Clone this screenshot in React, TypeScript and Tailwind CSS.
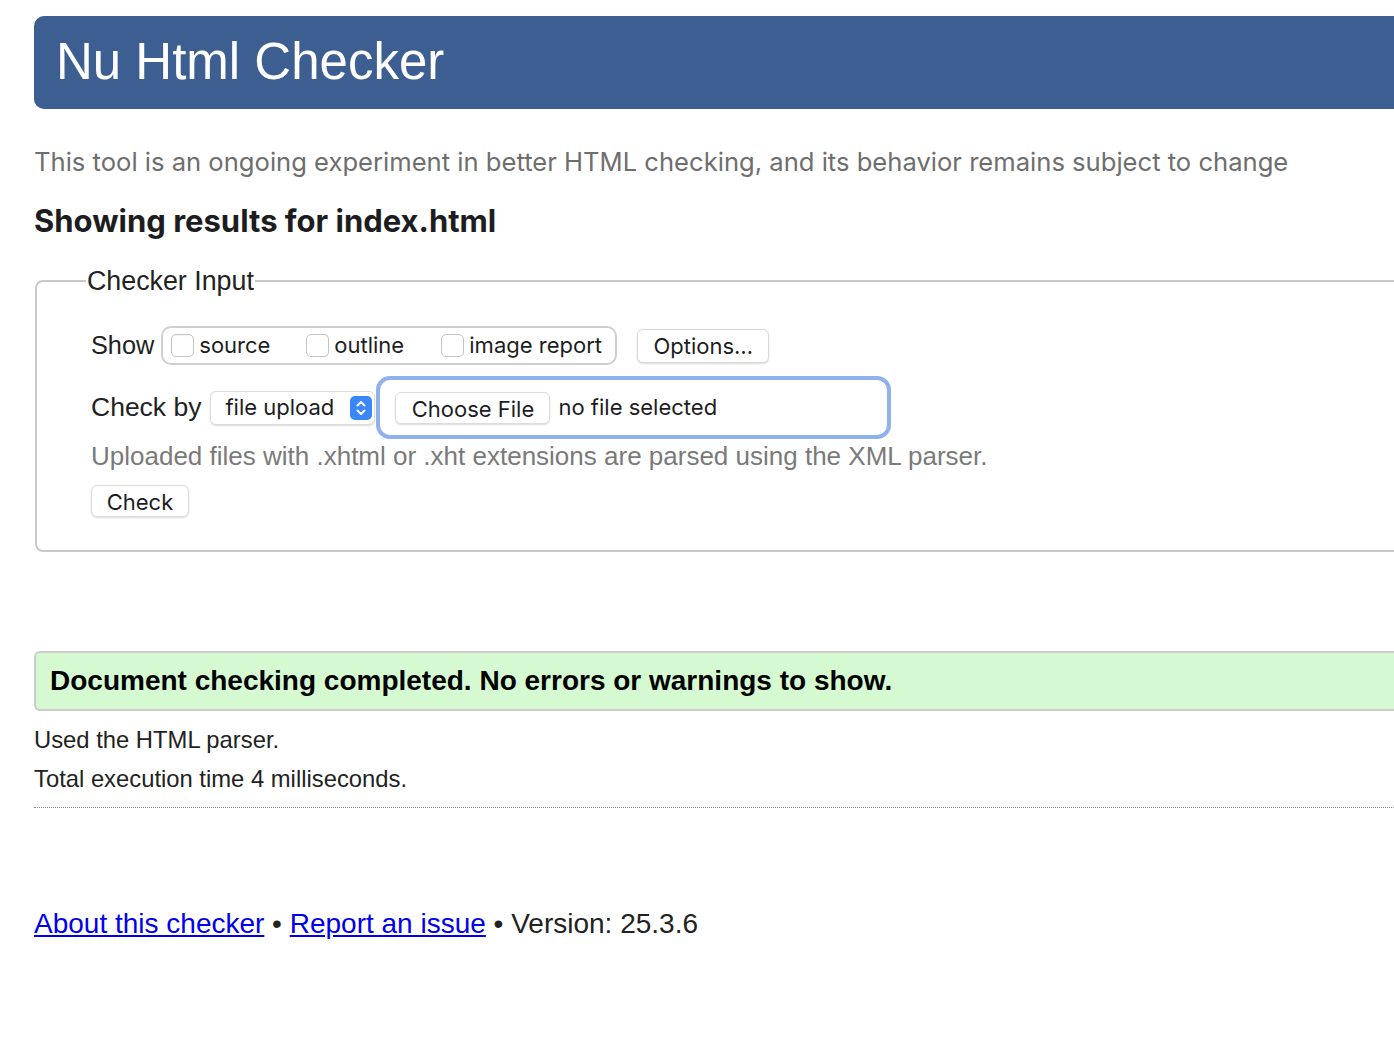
export default function App() {
  const helv = "font-['Liberation_Sans',Arial,sans-serif]"
  const sys = "font-['Inter','Noto_Sans',sans-serif]"

  return (
    <main className={`min-h-screen w-full overflow-hidden bg-white ${helv} text-[#222]`}>
      <div className="w-[1420px] pl-[34px] pt-[16px]">
        <header className="h-[93px] rounded-l-[10px] bg-[#3d5e91] pl-[22px] flex items-center">
          <h1 className="text-[51px] leading-none text-white -mt-[2px]">Nu Html Checker</h1>
        </header>

        <p className={`${sys} mt-[38px] text-[25.6px] leading-[30px] text-[#6e6e6e]`}>
          This tool is an ongoing experiment in better HTML checking, and its behavior remains subject to change
        </p>

        <h2 className={`${sys} mt-[26px] text-[31px] leading-[36px] font-bold text-[#1d1d1f]`}>
          Showing results for index.html
        </h2>

        <fieldset className="mt-[28px] ml-[1px] border-2 border-[#c9c9c9] rounded-[8px] pl-[54px] pb-[33px]">
          <legend className="ml-[-5px] px-[1px] text-[26.8px] leading-[28px] text-[#222]">Checker Input</legend>

          <div className="mt-[31px] flex items-center">
            <span className="text-[25.3px] mr-[7px]">Show</span>
            <div className={`${sys} h-[39px] w-[456px] border-2 border-[#cfcfcf] rounded-[10px] flex items-center pl-[8px] text-[22px] text-[#1d1d1f]`}>
              <label className="flex items-center w-[135px]">
                <span className="w-[23px] h-[23px] rounded-[5px] border border-[#c4c4c4] bg-white shadow-[inset_0_1px_1px_rgba(0,0,0,0.05)] mr-[5px]" />
                source
              </label>
              <label className="flex items-center w-[135px]">
                <span className="w-[23px] h-[23px] rounded-[5px] border border-[#c4c4c4] bg-white mr-[5px]" />
                outline
              </label>
              <label className="flex items-center">
                <span className="w-[23px] h-[23px] rounded-[5px] border border-[#c4c4c4] bg-white mr-[5px]" />
                image report
              </label>
            </div>
            <button className={`${sys} ml-[20px] h-[34px] w-[132px] rounded-[6px] bg-white border border-[#d9d9d9] shadow-[0_1px_2px_rgba(0,0,0,0.15)] text-[22px] text-[#1d1d1f]`}>
              Options…
            </button>
          </div>

          <div className="mt-[11px] flex items-center">
            <span className="text-[26.5px] mr-[9px]">Check by</span>
            <div className={`${sys} h-[34px] w-[165px] rounded-[6px] bg-white border border-[#dcdcdc] shadow-[0_1px_2px_rgba(0,0,0,0.15)] flex items-center pl-[14px] pr-[2px] text-[22px] text-[#1d1d1f]`}>
              <span className="flex-1">file upload</span>
              <span className="w-[22px] h-[24px] rounded-[5px] bg-[#3b87f7] flex items-center justify-center">
                <svg width="12" height="18" viewBox="0 0 12 18" fill="none" stroke="white" strokeWidth="2" strokeLinecap="round" strokeLinejoin="round">
                  <path d="M2.5 6.5 L6 3 L9.5 6.5" />
                  <path d="M2.5 11.5 L6 15 L9.5 11.5" />
                </svg>
              </span>
            </div>
            <div className={`${sys} ml-[1px] h-[63px] w-[515px] border-4 border-[#8fb2ef] rounded-[14px] flex items-center pl-[15px] text-[22px] text-[#1d1d1f]`}>
              <button className="h-[32px] w-[155px] rounded-[6px] bg-white border border-[#dcdcdc] shadow-[0_1px_2px_rgba(0,0,0,0.15)]">
                Choose File
              </button>
              <span className="ml-[8px]">no file selected</span>
            </div>
          </div>

          <p className="mt-[1px] text-[26px] leading-[32px] text-[#7a7a7a]">
            Uploaded files with .xhtml or .xht extensions are parsed using the XML parser.
          </p>

          <button className={`${sys} mt-[13px] h-[32px] w-[98px] rounded-[6px] bg-white border border-[#dcdcdc] shadow-[0_1px_2px_rgba(0,0,0,0.15)] text-[22px] text-[#1d1d1f]`}>
            Check
          </button>
        </fieldset>

        <div className="mt-[99px] h-[60px] border-2 border-[#cbcbcb] rounded-[6px] bg-[#d5fad2] flex items-center pl-[14px]">
          <p className="text-[28px] font-bold text-black">Document checking completed. No errors or warnings to show.</p>
        </div>

        <p className="mt-[14px] text-[23.8px] leading-[30px]">Used the HTML parser.</p>
        <p className="mt-[9px] text-[23.8px] leading-[30px]">Total execution time 4 milliseconds.</p>
        <div className="mt-[13px] border-t border-dotted border-[#888]" />

        <footer className="mt-[100px] text-[28px] leading-[32px]">
          <a href="#" className="text-[#0000ee] underline">About this checker</a>
          {' • '}
          <a href="#" className="text-[#0000ee] underline">Report an issue</a>
          {' • Version: 25.3.6'}
        </footer>
      </div>
    </main>
  )
}
